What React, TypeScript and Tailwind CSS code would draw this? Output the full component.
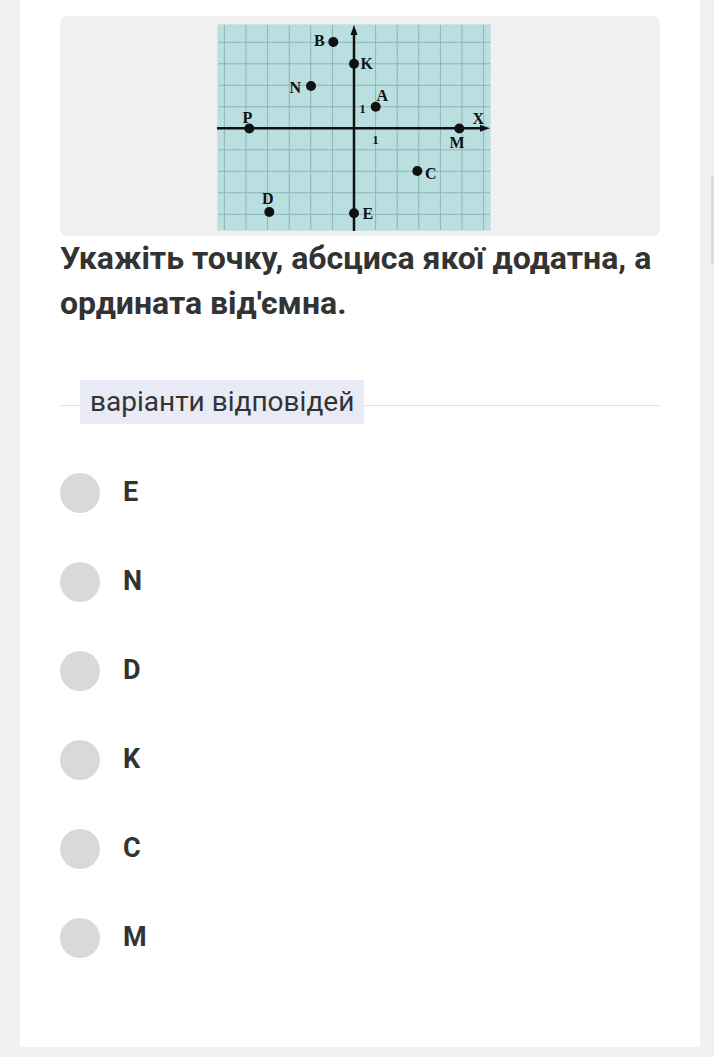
import React from "react";

const UX = 21.6;
const UY = 21.5;
const OX = 137;
const OY = 104.3;

function Graph() {
  const vlines = [];
  for (let k = -6; k <= 6; k++) vlines.push(OX + k * UX);
  const hlines = [];
  for (let k = -4; k <= 4; k++) hlines.push(OY + k * UY);
  const dots: [number, number][] = [
    [116.3, 18],
    [137, 39.7],
    [94, 62],
    [158.7, 82.7],
    [32.3, 104.5],
    [242.3, 104.5],
    [200.3, 147],
    [52.3, 188],
    [137, 189.3],
  ];
  const labels: [string, number, number][] = [
    ["B", 97, 22],
    ["K", 143.5, 45.3],
    ["N", 72.5, 69.3],
    ["A", 159.5, 77],
    ["P", 25.5, 99],
    ["X", 255.5, 100.3],
    ["M", 232.5, 123.7],
    ["C", 208, 155.3],
    ["D", 45, 180.3],
    ["E", 145.5, 195.3],
  ];
  return (
    <svg width="274" height="207" viewBox="0 0 274 207" className="block">
      <rect x="0" y="0" width="274" height="207" fill="#b9dfe1" />
      {vlines.map((x, i) => (
        <line key={"v" + i} x1={x} y1="0" x2={x} y2="207" stroke="#8fb3b7" strokeWidth="1" />
      ))}
      {hlines.map((y, i) => (
        <line key={"h" + i} x1="0" y1={y} x2="274" y2={y} stroke="#8fb3b7" strokeWidth="1" />
      ))}
      <rect x="0.5" y="0.5" width="273" height="206" fill="none" stroke="#cfe3e5" strokeWidth="1" />
      <line x1={OX} y1="207" x2={OX} y2="9" stroke="#111" strokeWidth="2.5" />
      <polygon points={`${OX},1 ${OX - 3.5},11 ${OX + 3.5},11`} fill="#111" />
      <line x1="0" y1={OY} x2="265" y2={OY} stroke="#111" strokeWidth="2.5" />
      <polygon points={`273,${OY} 263,${OY - 3.5} 263,${OY + 3.5}`} fill="#111" />
      {dots.map(([x, y], i) => (
        <circle key={"d" + i} cx={x} cy={y} r="5" fill="#111" />
      ))}
      {labels.map(([t, x, y], i) => (
        <text
          key={"l" + i}
          x={x}
          y={y}
          fontFamily="'Liberation Serif', serif"
          fontWeight="bold"
          fontSize="16"
          fill="#111"
        >
          {t}
        </text>
      ))}
      <text x="142.5" y="88.7" fontFamily="'Liberation Serif', serif" fontWeight="bold" fontSize="12" fill="#111">
        1
      </text>
      <text x="155.5" y="120.3" fontFamily="'Liberation Serif', serif" fontWeight="bold" fontSize="12" fill="#111">
        1
      </text>
    </svg>
  );
}

const options = ["E", "N", "D", "K", "C", "M"];

export default function App() {
  return (
    <div className="relative min-h-[1057px] bg-[#f1f1f1] font-['Roboto','Noto_Sans',sans-serif]">
      <div className="ml-5 w-[680px] bg-white px-10 pt-4 h-[1047px]">
        <div className="flex h-[220px] justify-center rounded-lg bg-[#f0f0f0] pt-2 pr-[12px]">
          <Graph />
        </div>
        <p className="text-[32px] font-bold leading-[45px] text-[#333333]">
          Укажіть точку, абсциса якої додатна, а ордината від'ємна.
        </p>
        <div className="relative mt-[54px] h-[44px]">
          <div className="absolute left-0 right-0 top-[25px] h-px bg-[#e2e2e2]" />
          <span className="relative ml-5 inline-block h-[44px] bg-[#e8eaf5] px-[10px] text-[28px] leading-[44px] text-[#333333]">
            варіанти відповідей
          </span>
        </div>
        <div className="mt-[24px] flex flex-col">
          {options.map((o) => (
            <div key={o} className="flex h-[89px] items-center">
              <div className="h-10 w-10 rounded-full bg-[#d9d9d9]" />
              <span className="ml-[23px] text-[27px] font-bold text-[#333333]">{o}</span>
            </div>
          ))}
        </div>
      </div>
      <div className="absolute right-0 top-[176px] h-[88px] w-[3px] bg-[#dcdcdc]" />
    </div>
  );
}
